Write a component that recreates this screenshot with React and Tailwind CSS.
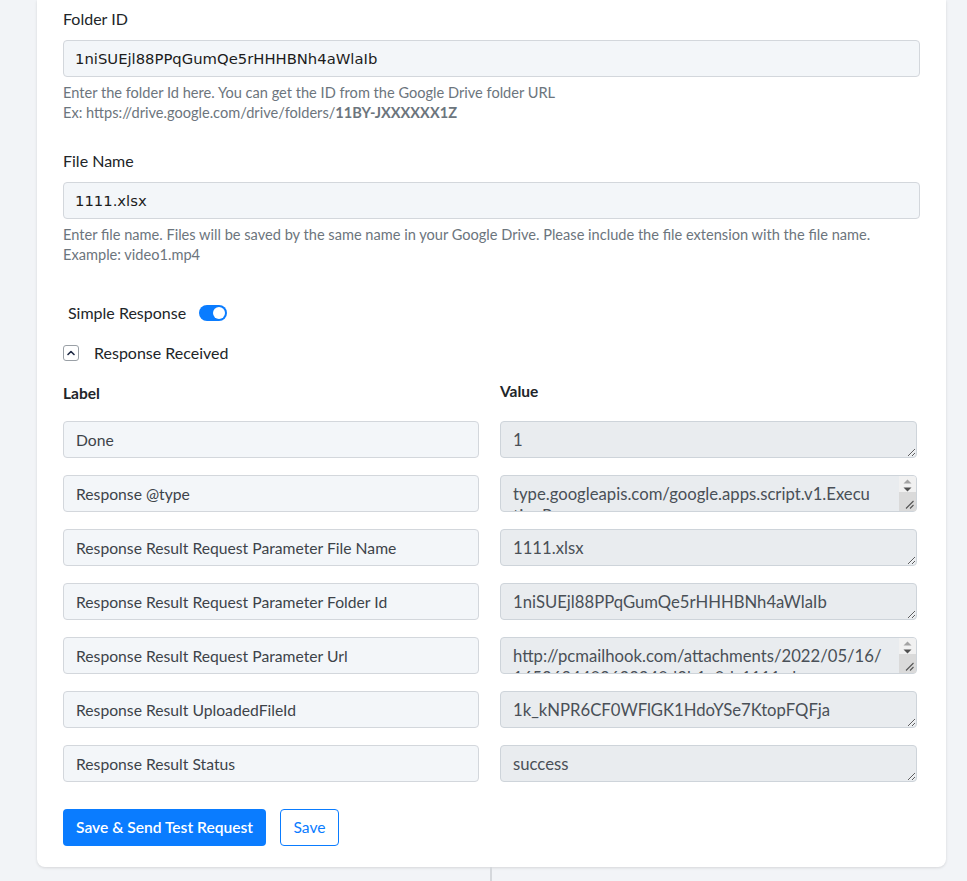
import { useState } from 'react';

// `wrapPad` leaves room for the scrollbar on values that wrap onto a second line
const RESPONSE_FIELDS = [
  { label: 'Done', value: '1' },
  {
    label: 'Response @type',
    value: 'type.googleapis.com/google.apps.script.v1.ExecutionResponse',
    wrapPad: 'pr-[42px]',
  },
  { label: 'Response Result Request Parameter File Name', value: '1111.xlsx' },
  { label: 'Response Result Request Parameter Folder Id', value: '1niSUEjl88PPqGumQe5rHHHBNh4aWlaIb' },
  {
    label: 'Response Result Request Parameter Url',
    value: 'http://pcmailhook.com/attachments/2022/05/16/1652694403628240d3b1e0d_1111.xlsx',
    wrapPad: 'pr-[31px]',
  },
  { label: 'Response Result UploadedFileId', value: '1k_kNPR6CF0WFlGK1HdoYSe7KtopFQFja' },
  { label: 'Response Result Status', value: 'success' },
];

const labelFont = { fontFamily: 'Lato, "Noto Sans", sans-serif' };

const TextField = ({ label, value, help }) => (
  <div className="flex flex-col">
    <label className="text-[16px] leading-5 text-[#212529] mb-[11px]">{label}</label>
    <input
      readOnly
      value={value}
      className="h-[37px] w-full rounded border border-[#d3d7dc] bg-[#f3f6f9] px-[11px] text-[14.8px] text-[#1c1c1c] outline-none"
      style={{ fontFamily: '"DejaVu Sans", Verdana, sans-serif' }}
    />
    <div className="mt-[6px] text-[14.6px] leading-5 text-[#6c757d]">{help}</div>
  </div>
);

const Toggle = ({ on, onChange }) => (
  <button
    type="button"
    onClick={() => onChange(!on)}
    className={`relative h-4 w-7 rounded-full ${on ? 'bg-[#0a7cff]' : 'bg-gray-300'}`}
  >
    <span
      className={`absolute top-[2px] h-3 w-3 rounded-full bg-white ${on ? 'left-[14px]' : 'left-[2px]'}`}
    />
  </button>
);

// classic scrollbar + resize grip shown on textareas whose value wraps
const FakeScrollbar = () => (
  <div className="pointer-events-none absolute right-[1px] top-[1px] bottom-[1px] flex w-[17px] flex-col rounded-r-[3px] bg-[#f1f1f1]">
    <div className="flex h-[16px] flex-col items-center justify-center gap-[3px] pt-[2px]">
      <svg width="9" height="5" viewBox="0 0 9 5">
        <path d="M0.5 4.5 4.5 0.5 8.5 4.5Z" fill="#a3a3a3" />
      </svg>
      <svg width="9" height="5" viewBox="0 0 9 5">
        <path d="M0.5 0.5 4.5 4.5 8.5 0.5Z" fill="#505050" />
      </svg>
    </div>
    <div className="relative flex-1 bg-[#dadada]">
      <svg className="absolute bottom-[2px] right-[2px]" width="9" height="9" viewBox="0 0 9 9">
        <path d="M8.5 1 1 8.5M8.5 5 5 8.5" stroke="#555" strokeWidth="1.1" />
      </svg>
    </div>
  </div>
);

const ResponseRow = ({ label, value, wrapPad }) => (
  <>
    <input
      readOnly
      value={label}
      className="h-[37px] w-full rounded border border-[#d3d7dc] bg-[#f3f6f9] px-3 text-[15.7px] text-[#3d4349] outline-none"
      style={labelFont}
    />
    <div className="relative">
      <textarea
        readOnly
        rows={1}
        value={value}
        className={`block h-[37px] w-full overflow-hidden whitespace-pre-wrap break-all rounded border border-[#ced4da] bg-[#e9ecef] pt-[7px] pb-0 pl-3 text-[16.7px] leading-[22px] text-[#495057] outline-none ${wrapPad || 'pr-3'}`}
        style={labelFont}
      />
      {wrapPad && <FakeScrollbar />}
    </div>
  </>
);

export default function App() {
  const [simple, setSimple] = useState(true);
  const [open, setOpen] = useState(true);

  return (
    <div className="min-h-[881px] bg-[#f2f4f7] pl-[37px]" style={labelFont}>
      <div className="w-[909px] rounded-b-lg bg-white px-[26px] pt-[9px] pb-[21px] shadow-[0_1px_3px_rgba(0,0,0,0.12)]">
        <TextField
          label="Folder ID"
          value="1niSUEjl88PPqGumQe5rHHHBNh4aWlaIb"
          help={
            <>
              Enter the folder Id here. You can get the ID from the Google Drive folder URL
              <br />
              Ex: https://drive.google.com/drive/folders/<b className="font-bold">11BY-JXXXXXX1Z</b>
            </>
          }
        />

        <div className="mt-7">
          <TextField
            label="File Name"
            value="1111.xlsx"
            help={
              <>
                Enter file name. Files will be saved by the same name in your Google Drive. Please include the file extension with the file name.
                <br />
                Example: video1.mp4
              </>
            }
          />
        </div>

        {/* response options */}
        <div className="mt-[38px] flex items-center gap-[13px] pl-[5px]">
          <span className="text-[16px] leading-5 text-[#212529]">Simple Response</span>
          <Toggle on={simple} onChange={setSimple} />
        </div>

        <div className="mt-[20px] flex items-center gap-[15px]">
          <button
            type="button"
            onClick={() => setOpen(!open)}
            className="flex h-[16px] w-[16px] items-center justify-center rounded-[3px] border border-[#9aa0a6] bg-white"
          >
            <svg width="8" height="6" viewBox="0 0 8 6" fill="none">
              <path d="M1 4.5 4 1.5 7 4.5" stroke="#1f2a44" strokeWidth="1.6" strokeLinecap="round" strokeLinejoin="round" />
            </svg>
          </button>
          <span className="text-[16px] leading-5 text-[#212529]">Response Received</span>
        </div>

        {open && (
          <>
            <div className="mt-[18px] grid grid-cols-[416px_417px] gap-x-[21px] items-end">
              <div className="text-[15.5px] font-bold leading-5 text-[#212529]">Label</div>
              <div className="text-[15.5px] font-bold leading-5 text-[#212529] mb-[2px]">Value</div>
            </div>
            <div className="mt-[18px] grid grid-cols-[416px_417px] gap-x-[21px] gap-y-[17px]">
              {RESPONSE_FIELDS.map((f) => (
                <ResponseRow key={f.label} label={f.label} value={f.value} wrapPad={f.wrapPad} />
              ))}
            </div>
          </>
        )}

        <div className="mt-[27px] flex gap-[14px]">
          <button
            type="button"
            className="h-[37px] w-[203px] rounded bg-[#0a7cff] text-[15.6px] font-semibold text-white"
          >
            Save &amp; Send Test Request
          </button>
          <button
            type="button"
            className="h-[37px] w-[59px] rounded border border-[#0a7cff] bg-white text-[15.6px] text-[#0a7cff]"
          >
            Save
          </button>
        </div>
      </div>

      {/* connector to next step */}
      <div className="ml-[453px] h-[14px] w-[2px] bg-[#d5d8dc]" />
    </div>
  );
}
